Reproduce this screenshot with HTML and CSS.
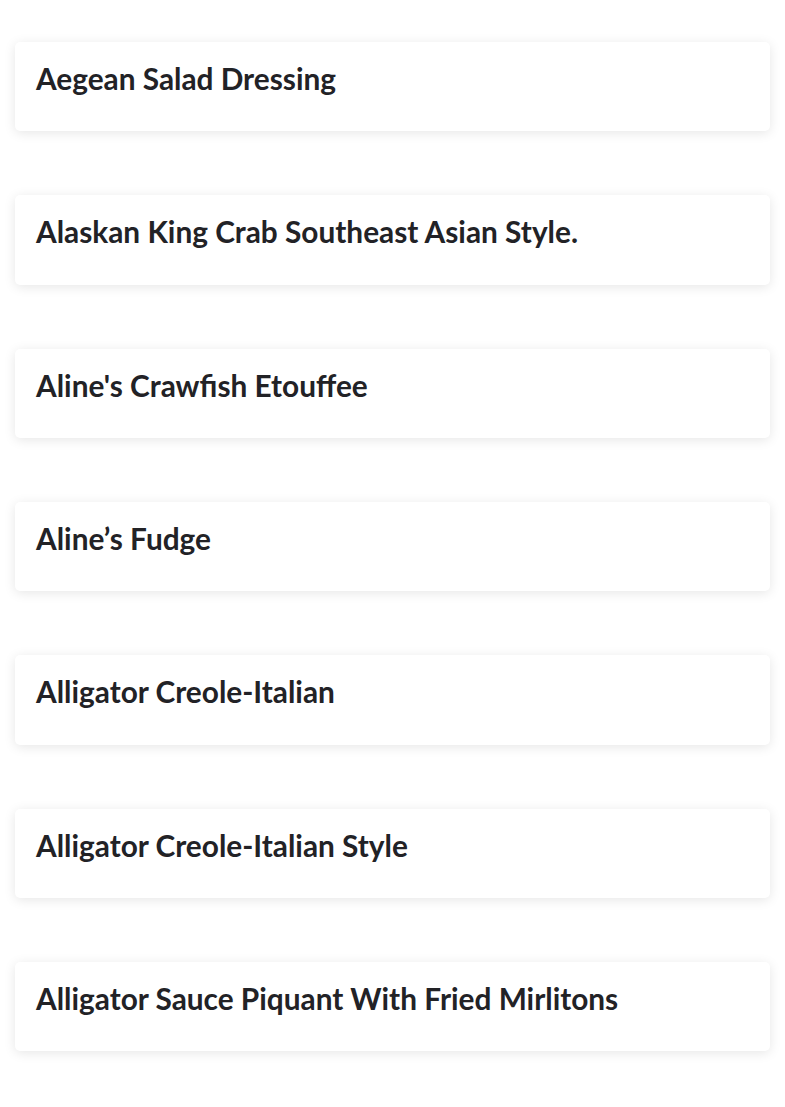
FILE: index.html
```html
<!DOCTYPE html>
<html lang="en">
<head>
<meta charset="utf-8">
<title>Recipes</title>
<link rel="stylesheet" href="styles.css">
</head>
<body>
<main class="list">
  <div class="card"><h3 class="title">Aegean Salad Dressing</h3></div>
  <div class="card"><h3 class="title">Alaskan King Crab Southeast Asian Style.</h3></div>
  <div class="card"><h3 class="title">Aline's Crawfish Etouffee</h3></div>
  <div class="card"><h3 class="title">Aline’s Fudge</h3></div>
  <div class="card"><h3 class="title">Alligator Creole-Italian</h3></div>
  <div class="card"><h3 class="title">Alligator Creole-Italian Style</h3></div>
  <div class="card"><h3 class="title">Alligator Sauce Piquant With Fried Mirlitons</h3></div>
  <div class="card"></div>
</main>
</body>
</html>
```

FILE: styles.css
```css
html, body {
  margin: 0;
  padding: 0;
  background: #fff;
}
.list {
  display: flex;
  flex-direction: column;
  gap: 64px;
  padding: 42px 15px 0;
}
.card {
  box-sizing: border-box;
  height: 89.33px;
  flex-shrink: 0;
  background: #fff;
  border-radius: 5px;
  box-shadow: 0 2px 12px rgba(0, 0, 0, 0.1);
  padding: 20px 21px 0;
}
.title {
  margin: 0;
  font-family: "Lato", "Noto Sans", sans-serif;
  font-weight: 700;
  font-size: 29.8px;
  line-height: 34px;
  color: #222226;
}
```
